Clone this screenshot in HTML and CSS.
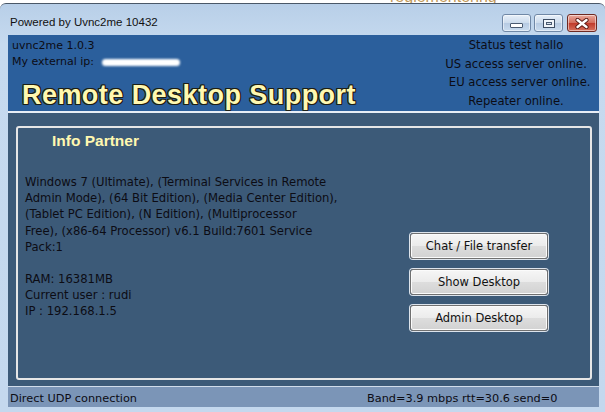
FILE: index.html
```html
<!DOCTYPE html>
<html>
<head>
<meta charset="utf-8">
<link rel="stylesheet" href="styles.css">
</head>
<body>
<div class="backdrop"><span class="behind">reglementering</span></div>
<div class="window">
  <div class="titlebar">
    <span class="title">Powered by Uvnc2me 10432</span>
    <div class="controls">
      <span class="ctl min"><span class="ctl-bar"></span></span>
      <span class="ctl max"><span class="ctl-box"></span></span>
      <span class="ctl close"><svg width="16" height="11" viewBox="0 0 16 11"><path d="M3.5 2 L12.5 9 M12.5 2 L3.5 9" stroke="#5a1a14" stroke-width="4.2" stroke-linecap="round"/><path d="M3.5 2 L12.5 9 M12.5 2 L3.5 9" stroke="#ffffff" stroke-width="2.4" stroke-linecap="round"/></svg></span>
    </div>
  </div>
  <div class="client">
    <div class="header">
      <div class="header-left">
        <div class="small">uvnc2me 1.0.3</div>
        <div class="small">My external ip: <span class="ip"></span></div>
        <div class="brand">Remote Desktop Support</div>
      </div>
      <div class="status">
        <div>Status test hallo</div>
        <div>US access server online.</div>
        <div>&nbsp;&nbsp;EU access server online.</div>
        <div>Repeater online.</div>
      </div>
    </div>
    <div class="panel">
      <div class="frame">
        <div class="info-title">Info Partner</div>
        <div class="frame-body">
          <div class="info">
            <p>Windows 7 (Ultimate), (Terminal Services in Remote<br>Admin Mode), (64 Bit Edition), (Media Center Edition),<br>(Tablet PC Edition), (N Edition), (Multiprocessor<br>Free), (x86-64 Processor) v6.1 Build:7601 Service<br>Pack:1</p>
            <p>RAM: 16381MB<br>Current user : rudi<br>IP : 192.168.1.5</p>
          </div>
          <div class="actions">
            <button class="btn">Chat / File transfer</button>
            <button class="btn">Show Desktop</button>
            <button class="btn">Admin Desktop</button>
          </div>
        </div>
      </div>
    </div>
    <div class="statusbar">
      <span>Direct UDP connection</span>
      <span class="band">Band=3.9 mbps rtt=30.6 send=0</span>
    </div>
  </div>
</div>
</body>
</html>
```

FILE: styles.css
```css
html, body {
  margin: 0;
  padding: 0;
  width: 605px;
  height: 412px;
  overflow: hidden;
  background: #ffffff;
}

.backdrop {
  height: 3px;
  background: #ffffff;
  overflow: hidden;
  position: relative;
}

.behind {
  position: absolute;
  left: 390px;
  top: -12px;
  font: 16px "Liberation Sans", Arial, sans-serif;
  color: #c09858;
}

.window {
  height: 409px;
  border-top: 1px solid #4a5868;
  border-radius: 6px 6px 0 0;
  background: linear-gradient(#b8cfe8, #c6daef 40px, #c4d8ee);
  display: flex;
  flex-direction: column;
  box-sizing: border-box;
}

.titlebar {
  height: 31px;
  display: flex;
  justify-content: space-between;
  padding: 0 8px 0 10px;
  flex: none;
}

.title {
  font: 11.5px "Liberation Sans", Arial, sans-serif;
  color: #111111;
  margin-top: 12px;
}

.controls {
  display: flex;
  gap: 3px;
  margin-top: 10px;
}

.ctl {
  width: 29px;
  height: 18px;
  border: 1px solid #7088a6;
  border-radius: 3px;
  box-sizing: border-box;
  display: flex;
  align-items: center;
  justify-content: center;
  background: linear-gradient(#e8f0f9, #ccdbec 50%, #b6cae2 51%, #cadcef);
  box-shadow: inset 0 0 0 1px rgba(255,255,255,0.5);
}

.ctl.close {
  width: 30px;
  margin-left: 1px;
  border-color: #6e2a22;
  background: linear-gradient(#eaa99c, #d26b5a 50%, #c0392a 51%, #d6715d);
}

.ctl-bar {
  width: 13px;
  height: 5px;
  margin-top: 5px;
  border: 1px solid #4a5a70;
  background: #ffffff;
  border-radius: 1px;
  box-sizing: border-box;
}

.ctl-box {
  width: 12px;
  height: 9px;
  border: 1px solid #3e4e64;
  box-shadow: inset 0 0 0 2px #f0f5fa, inset 0 0 0 3px #4a5a70;
  background: #d8e2ee;
  box-sizing: border-box;
}

.client {
  flex: 1;
  margin: 0 6px 5px 8px;
  display: flex;
  flex-direction: column;
}

.header {
  height: 78px;
  background: #2b5f9c;
  border-bottom: 2px solid #e8eef6;
  display: flex;
  justify-content: space-between;
  padding: 3px 0 0 4px;
  box-sizing: border-box;
  flex: none;
}

.small {
  font: 11px "DejaVu Sans", Tahoma, sans-serif;
  color: #0c0c14;
  line-height: 16px;
}

.ip {
  display: inline-block;
  width: 78px;
  height: 7px;
  margin-left: 4px;
  background: #ffffff;
  border-radius: 4px;
  vertical-align: middle;
  filter: blur(1px);
}

.brand {
  margin: 10px 0 0 10px;
  font: bold 27px "Liberation Sans", Arial, sans-serif;
  color: #fff8b0;
  letter-spacing: 0.45px;
  text-shadow: -1px -1px 0 #1e1e14, 1px -1px 0 #1e1e14, -1px 1px 0 #1e1e14, 1px 1px 0 #1e1e14, 0 1px 0 #1e1e14, 0 -1px 0 #1e1e14, 1px 0 0 #1e1e14, -1px 0 0 #1e1e14;
}

.status {
  width: 166px;
  text-align: center;
  font: 11.6px "DejaVu Sans", Tahoma, sans-serif;
  color: #0c0c14;
  line-height: 18.7px;
  margin-top: -2px;
}

.panel {
  flex: 1;
  background: #3c5a78;
  padding: 13px 7px 6px 8px;
  display: flex;
  border-bottom: 1px solid #d0dcea;
}

.frame {
  flex: 1;
  border: 2px solid #e6e6e6;
  border-radius: 3px;
  padding: 3px 0 0 7px;
  display: flex;
  flex-direction: column;
}

.info-title {
  margin-left: 27px;
  font: bold 15.5px "Liberation Sans", Arial, sans-serif;
  color: #fff8b0;
  line-height: 20px;
}

.frame-body {
  display: flex;
  justify-content: space-between;
  margin-top: 23px;
}

.info {
  font: 11.6px "DejaVu Sans", Tahoma, sans-serif;
  color: #0c0c14;
  line-height: 16.2px;
}

.info p {
  margin: 0 0 16px 0;
}

.actions {
  display: flex;
  flex-direction: column;
  gap: 10px;
  margin: 59px 42px 0 0;
}

.btn {
  width: 138px;
  height: 26px;
  font: 11.5px "DejaVu Sans", Tahoma, sans-serif;
  color: #111111;
  background: linear-gradient(#f6f6f6, #ebebeb 50%, #dddddd 51%, #d2d2d2);
  border: 1px solid #707070;
  border-radius: 3px;
  box-shadow: inset 0 0 0 1px #fbfbfb, 0 0 0 1px #dde4ec;
  padding: 0;
}

.statusbar {
  height: 20px;
  background: #7b95b7;
  display: flex;
  align-items: center;
  padding: 2px 0 0 2px;
  box-sizing: border-box;
  font: 11.3px "DejaVu Sans", Tahoma, sans-serif;
  color: #0c0c14;
  flex: none;
}

.band {
  margin-left: 230px;
}
```
